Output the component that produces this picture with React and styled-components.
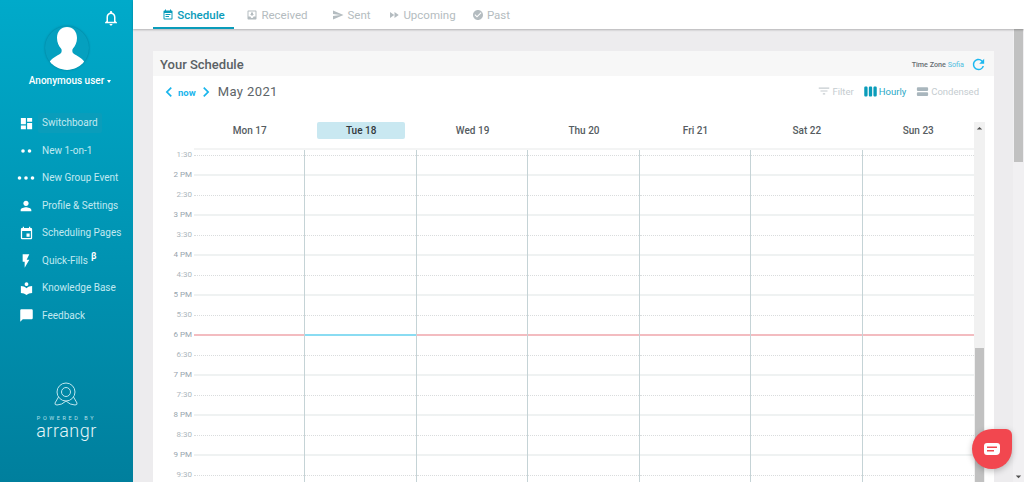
import React from 'react';
import styled, { createGlobalStyle } from 'styled-components';
import {
  MdDashboard, MdPerson, MdEvent, MdFlashOn, MdLocalLibrary, MdChatBubble, MdNotificationsNone,
  MdEventNote, MdMoveToInbox, MdSend, MdFastForward, MdCheckCircle, MdFilterList, MdViewWeek,
  MdViewStream, MdRefresh, MdChevronLeft, MdChevronRight, MdArrowDropDown, MdArrowDropUp,
} from 'react-icons/md';

const GlobalStyle = createGlobalStyle`
  html, body { margin: 0; height: 100%; overflow: hidden; }
  body { font-family: Roboto, "Noto Sans", Arial, sans-serif; background: #edecee; }
  #root { height: 100%; }
  * { box-sizing: border-box; }
`;

const Dots = ({ count }) => (
  <svg width="20" height="8" viewBox="0 0 20 8" fill="currentColor">
    {count === 2 ? (
      <>
        <circle cx="7" cy="4" r="1.8" />
        <circle cx="13.5" cy="4" r="1.8" />
      </>
    ) : (
      <>
        <circle cx="3.5" cy="4" r="1.8" />
        <circle cx="10" cy="4" r="1.8" />
        <circle cx="16.5" cy="4" r="1.8" />
      </>
    )}
  </svg>
);

const navItems = [
  { label: 'Switchboard', icon: <MdDashboard size={15} />, active: true },
  { label: 'New 1-on-1', icon: <Dots count={2} /> },
  { label: 'New Group Event', icon: <Dots count={3} /> },
  { label: 'Profile & Settings', icon: <MdPerson size={16} /> },
  { label: 'Scheduling Pages', icon: <MdEvent size={15} /> },
  { label: 'Quick-Fills', icon: <MdFlashOn size={16} />, beta: true },
  { label: 'Knowledge Base', icon: <MdLocalLibrary size={15} /> },
  { label: 'Feedback', icon: <MdChatBubble size={15} /> },
];

const tabs = [
  { label: 'Schedule', icon: <MdEventNote size={12} />, width: 81, active: true },
  { label: 'Received', icon: <MdMoveToInbox size={12} />, width: 86 },
  { label: 'Sent', icon: <MdSend size={12} />, width: 63 },
  { label: 'Upcoming', icon: <MdFastForward size={12} />, width: 78 },
  { label: 'Past', icon: <MdCheckCircle size={12} />, width: 60 },
];

const days = ['Mon 17', 'Tue 18', 'Wed 19', 'Thu 20', 'Fri 21', 'Sat 22', 'Sun 23'];

const rows = [
  '1:30', '2 PM', '2:30', '3 PM', '3:30', '4 PM', '4:30', '5 PM', '5:30', '6 PM',
  '6:30', '7 PM', '7:30', '8 PM', '8:30', '9 PM', '9:30',
];

const lineKind = (row, dayIndex) => {
  if (row === '6 PM') return dayIndex === 1 ? 'today' : 'now';
  return row.includes('M') ? 'hour' : 'half';
};

function App() {
  return (
    <Page>
      <GlobalStyle />
      <Sidebar>
        <BellRow>
          <MdNotificationsNone size={18} />
        </BellRow>
        <Avatar>
          <svg width="44" height="44" viewBox="0 0 44 44" fill="#fff">
            <path d="M22 1c-6 0-10 4.500-10 11 0 4.500 1.800 8 4 10.500 1 1.200 1 3.800-.5 5C12 30 7 31.500 4 37c4.500 4.500 11 7 18 7s13.500-2.500 18-7c-3-5.500-8-7-11.500-9.500-1.500-1.200-1.500-3.800-.5-5 2.200-2.500 4-6 4-10.500C32 5.500 28 1 22 1z" />
          </svg>
        </Avatar>
        <UserName>
          Anonymous user<Caret />
        </UserName>
        <Nav>
          {navItems.map((item) => (
            <NavRow key={item.label}>
              <NavIcon>{item.icon}</NavIcon>
              <NavLabel $active={item.active}>
                {item.label}
                {item.beta && <Beta>β</Beta>}
              </NavLabel>
            </NavRow>
          ))}
        </Nav>
        <Brand>
          <svg width="26" height="24" viewBox="0 0 26 24" fill="none" stroke="#bfe6ee" strokeWidth="1">
            <circle cx="13" cy="10" r="9" />
            <circle cx="13" cy="10" r="4.500" />
            <path d="M5.500 15 L2 21 Q1.500 23 4 23 Q9 23 13 19 Q17 23 22 23 Q24.500 23 24 21 L20.500 15" />
          </svg>
          <PoweredBy>POWERED BY</PoweredBy>
          <BrandName>arrangr</BrandName>
        </Brand>
      </Sidebar>

      <Main>
        <TabBar>
          {tabs.map((tab) => (
            <Tab key={tab.label} $active={tab.active} $width={tab.width}>
              {tab.icon}
              {tab.label}
            </Tab>
          ))}
        </TabBar>
        <Body>
          <Content>
            <Card>
              <CardHeader>
                <CardTitle>Your Schedule</CardTitle>
                <TimeZone>
                  Time Zone <TimeZoneCity>Sofia</TimeZoneCity>
                </TimeZone>
                <RefreshButton>
                  <MdRefresh size={17} />
                </RefreshButton>
              </CardHeader>
              <Toolbar>
                <DateNav>
                  <MdChevronLeft size={20} />
                  <NowLink>now</NowLink>
                  <MdChevronRight size={20} />
                </DateNav>
                <MonthLabel>May 2021</MonthLabel>
                <ViewOptions>
                  <ViewOption>
                    <MdFilterList size={14} />
                    Filter
                  </ViewOption>
                  <ViewOption $active>
                    <MdViewWeek size={15} />
                    Hourly
                  </ViewOption>
                  <ViewOption $dark>
                    <MdViewStream size={15} />
                    Condensed
                  </ViewOption>
                </ViewOptions>
              </Toolbar>
              <Calendar>
                <CalendarMain>
                  <DayHeader>
                    <span />
                    {days.map((day) => (
                      <DayCell key={day}>
                        <DayChip $today={day === 'Tue 18'}>{day}</DayChip>
                      </DayCell>
                    ))}
                  </DayHeader>
                  <DayBand />
                  <TimeGrid>
                    <TimeGridInner>
                      {rows.map((row) => (
                        <TimeRow key={row}>
                          <TimeLabel $hour={row.includes('M')}>{row}</TimeLabel>
                          {days.map((day, i) => (
                            <GridCell key={day} $last={i === 6}>
                              <GridLine $kind={lineKind(row, i)} />
                            </GridCell>
                          ))}
                        </TimeRow>
                      ))}
                    </TimeGridInner>
                  </TimeGrid>
                </CalendarMain>
                <InnerScrollbar>
                  <ScrollArrow>
                    <MdArrowDropUp size={13} />
                  </ScrollArrow>
                  <InnerThumb />
                </InnerScrollbar>
              </Calendar>
            </Card>
          </Content>
          <PageScrollbar>
            <PageThumb />
            <PageScrollEnd>
              <MdArrowDropDown size={13} />
            </PageScrollEnd>
          </PageScrollbar>
        </Body>
      </Main>

      <ChatBubble>
        <svg width="18" height="14" viewBox="0 0 18 14">
          <path d="M4 1h10a3 3 0 0 1 3 3v5a4 4 0 0 1-4 4H4a3 3 0 0 1-3-3V4a3 3 0 0 1 3-3z" fill="#fff" />
          <rect x="4" y="4.500" width="10" height="1.500" fill="#f2474f" />
          <rect x="4" y="8" width="7" height="1.500" fill="#f2474f" />
        </svg>
      </ChatBubble>
    </Page>
  );
}

const Page = styled.div`
  display: flex;
  height: 482px;
  overflow: hidden;
`;

const Sidebar = styled.aside`
  width: 133px;
  flex: none;
  display: flex;
  flex-direction: column;
  align-items: center;
  background: linear-gradient(180deg, #00aaca 0%, #007f9d 100%);
  color: #fff;
`;

const BellRow = styled.div`
  align-self: stretch;
  display: flex;
  justify-content: flex-end;
  padding: 9px 13px 0 0;
  height: 26px;
`;

const Avatar = styled.div`
  width: 44px;
  height: 44px;
  border-radius: 50%;
  background: #05a0bf;
  box-shadow: 0 0 2px rgba(0, 70, 90, 0.5);
  overflow: hidden;
`;

const UserName = styled.div`
  margin-top: 3px;
  padding: 1px 0 0 7px;
  font-size: 10px;
  font-weight: 500;
  line-height: 14px;
  display: flex;
  align-items: center;
`;

const Caret = styled.span`
  margin-left: 3px;
  border-left: 2.5px solid transparent;
  border-right: 2.5px solid transparent;
  border-top: 3px solid #fff;
`;

const Nav = styled.nav`
  align-self: stretch;
  margin-top: 21.5px;
  display: flex;
  flex-direction: column;
`;

const NavRow = styled.div`
  height: 27.5px;
  display: flex;
  align-items: center;
`;

const NavIcon = styled.span`
  width: 38px;
  flex: none;
  padding: 0 2px 0 16px;
  display: flex;
  justify-content: center;
`;

const NavLabel = styled.span`
  padding: 0 4px;
  height: 20px;
  line-height: 20px;
  font-size: 10px;
  color: #c2e9f1;
  border-radius: 2px;
  background: ${(p) => (p.$active ? '#0a9dbb' : 'transparent')};
`;

const Beta = styled.sup`
  font-size: 9px;
  font-weight: 700;
  line-height: 0;
  margin-left: 3px;
  color: #fff;
`;

const Brand = styled.div`
  margin-top: 52px;
  display: flex;
  flex-direction: column;
  align-items: center;
`;

const PoweredBy = styled.div`
  margin-top: 8px;
  font-size: 5.5px;
  line-height: 8px;
  letter-spacing: 2.6px;
  color: #b5e0ea;
`;

const BrandName = styled.div`
  font-size: 18px;
  line-height: 18px;
  font-weight: 300;
  letter-spacing: 0.5px;
  color: #e4f5f8;
`;

const Main = styled.main`
  flex: 1;
  min-width: 0;
  display: flex;
  flex-direction: column;
`;

const TabBar = styled.div`
  height: 29px;
  flex: none;
  padding-left: 20px;
  display: flex;
  background: #fff;
  box-shadow: 0 1px 2px rgba(0, 0, 0, 0.25);
  position: relative;
`;

const Tab = styled.div`
  width: ${(p) => p.$width}px;
  padding-top: 3px;
  display: flex;
  align-items: center;
  justify-content: center;
  gap: 3px;
  font-size: 11.5px;
  font-weight: ${(p) => (p.$active ? 500 : 400)};
  color: ${(p) => (p.$active ? '#0a9cba' : '#b4bcc0')};
  border-bottom: 2px solid ${(p) => (p.$active ? '#0a9cba' : 'transparent')};
`;

const Body = styled.div`
  flex: 1;
  min-height: 0;
  display: flex;
`;

const Content = styled.div`
  flex: 1;
  min-width: 0;
  padding: 22px 19px 0 20px;
  overflow: hidden;
`;

const Card = styled.section`
  background: #fff;
  height: 100%;
  display: flex;
  flex-direction: column;
`;

const CardHeader = styled.header`
  height: 25px;
  flex: none;
  display: flex;
  align-items: center;
  padding: 1px 7px 0 7px;
  background: #f7f7f7;
`;

const CardTitle = styled.h2`
  margin: 0 auto 0 0;
  font-size: 13px;
  font-weight: 500;
  color: #5a6165;
`;

const TimeZone = styled.span`
  font-size: 7.2px;
  font-weight: 500;
  color: #666d72;
`;

const TimeZoneCity = styled.span`
  color: #4dbde0;
  font-weight: 400;
`;

const RefreshButton = styled.span`
  display: flex;
  margin-left: 6px;
  color: #1cb8f0;
`;

const Toolbar = styled.div`
  height: 46px;
  flex: none;
  display: flex;
  align-items: flex-start;
  padding: 7px 15px 0 6px;
`;

const DateNav = styled.div`
  display: flex;
  align-items: center;
  height: 18px;
  color: #19b5ec;
`;

const NowLink = styled.span`
  font-size: 9.5px;
  font-weight: 700;
  margin: 1px 0 0 -1px;
  color: #19b5ec;
`;

const MonthLabel = styled.span`
  margin: 1px 0 0 2px;
  font-size: 13px;
  line-height: 16px;
  letter-spacing: 0.4px;
  color: #5d6468;
`;

const ViewOptions = styled.div`
  margin-left: auto;
  display: flex;
  gap: 9px;
`;

const ViewOption = styled.span`
  display: flex;
  align-items: center;
  gap: 1px;
  height: 16px;
  font-size: 9.5px;
  color: ${(p) => (p.$active ? '#2aa8c6' : '#c5ccd0')};

  svg {
    color: ${(p) => (p.$active ? '#0a9cba' : p.$dark ? '#a9b6bd' : '#c5ccd0')};
  }
`;

const Calendar = styled.div`
  flex: 1;
  min-height: 0;
  display: flex;
  padding-right: 9px;
`;

const CalendarMain = styled.div`
  flex: 1;
  min-width: 0;
  display: flex;
  flex-direction: column;
`;

const DayHeader = styled.div`
  height: 26px;
  flex: none;
  display: grid;
  grid-template-columns: 41px repeat(7, 1fr);
`;

const DayCell = styled.div`
  display: flex;
  justify-content: center;
`;

const DayChip = styled.div`
  width: 88px;
  height: 17px;
  line-height: 18px;
  text-align: center;
  font-size: 10px;
  font-weight: 500;
  border-radius: 2px;
  color: ${(p) => (p.$today ? '#33393d' : '#555c61')};
  background: ${(p) => (p.$today ? '#c9e8f1' : 'transparent')};
`;

const DayBand = styled.div`
  height: 2px;
  flex: none;
  margin-left: 41px;
  background: #f3f4f4;
`;

const TimeGrid = styled.div`
  flex: 1;
  min-height: 0;
  overflow: hidden;
`;

const TimeGridInner = styled.div`
  margin-top: -5px;
`;

const TimeRow = styled.div`
  height: 20px;
  display: grid;
  grid-template-columns: 41px repeat(7, 1fr);
  align-items: stretch;
`;

const TimeLabel = styled.span`
  align-self: center;
  font-size: 8px;
  line-height: 10px;
  text-align: right;
  padding-right: 2px;
  color: ${(p) => (p.$hour ? '#97a4ad' : '#acb6bc')};
`;

const GridCell = styled.div`
  display: flex;
  align-items: center;
  border-right: ${(p) => (p.$last ? 'none' : '1px solid #c5d3d6')};
`;

const lineStyles = {
  hour: 'height: 2px; background: #eff2f2;',
  half: 'height: 0; border-top: 1px dotted #d9dcdd;',
  now: 'height: 2px; background: #f3bcc0;',
  today: 'height: 2px; background: #8adcf2;',
};

const GridLine = styled.div`
  width: 100%;
  ${(p) => lineStyles[p.$kind]}
`;

const InnerScrollbar = styled.div`
  width: 11px;
  flex: none;
  display: flex;
  flex-direction: column;
  align-items: center;
  background: #f1f1f1;
`;

const ScrollArrow = styled.span`
  display: flex;
  height: 12px;
  color: #505050;
`;

const InnerThumb = styled.div`
  margin-top: auto;
  width: 9px;
  height: 134px;
  background: #c1c1c1;
`;

const PageScrollbar = styled.div`
  width: 11px;
  flex: none;
  display: flex;
  flex-direction: column;
  align-items: center;
  background: #f1f0f2;
`;

const PageThumb = styled.div`
  width: 9px;
  height: 133px;
  background: #c1c1c1;
`;

const PageScrollEnd = styled.span`
  margin-top: auto;
  display: flex;
  height: 12px;
  color: #505050;
`;

const ChatBubble = styled.div`
  position: absolute;
  left: 972px;
  top: 429px;
  width: 40px;
  height: 40px;
  display: flex;
  align-items: center;
  justify-content: center;
  background: #f2474f;
  border-radius: 50% 6px 50% 50%;
  box-shadow: 0 2px 6px rgba(0, 0, 0, 0.25);
`;

export default App;
